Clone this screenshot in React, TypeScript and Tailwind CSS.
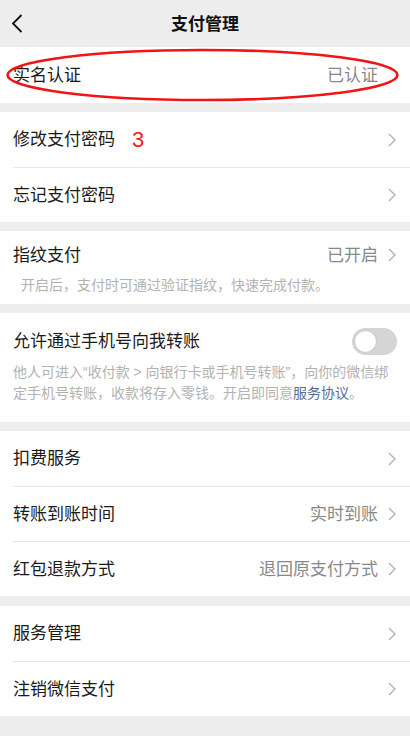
import React, { useState } from 'react';

const font = "font-['Liberation_Sans','Noto_Sans_CJK_SC',sans-serif]";

const Chevron = ({ hidden = false }: { hidden?: boolean }) => (
  <svg
    width="8"
    height="14"
    viewBox="0 0 8 14"
    className={`ml-[10px] shrink-0 ${hidden ? 'invisible' : ''}`}
  >
    <polyline points="1,1 7,7 1,13" fill="none" stroke="#b2b2b2" strokeWidth="1.4" />
  </svg>
);

interface RowProps {
  label: string;
  value?: string;
  extra?: React.ReactNode;
  divider?: boolean;
  noArrow?: boolean;
  height?: string;
}

const Row: React.FC<RowProps> = ({ label, value, extra, divider, noArrow, height = 'h-[55px]' }) => (
  <div className="pl-[13px]">
    <div
      className={`flex ${height} items-center pr-[14px] ${divider ? 'border-t border-[#e8e8e8]' : ''}`}
    >
      <span className="pt-px text-[17px] leading-6 text-[#1a1a1a]">{label}</span>
      {extra}
      <div className="flex-1" />
      {value && <span className="pt-px text-[17px] leading-6 text-[#888888]">{value}</span>}
      <Chevron hidden={noArrow} />
    </div>
  </div>
);

const Section: React.FC<{ children: React.ReactNode; className?: string }> = ({ children, className = '' }) => (
  <div className={`bg-white ${className}`}>{children}</div>
);

export default function App() {
  const [allowPhone, setAllowPhone] = useState(false);

  return (
    <div className={`min-h-screen bg-[#ededed] ${font}`}>
      {/* nav bar */}
      <div className="grid h-[47px] grid-cols-[48px_1fr_48px] items-center bg-[#ededed]">
        <div className="pl-[12px]">
          <svg width="11" height="19" viewBox="0 0 11 19">
            <polyline points="9.5,1 1,9.5 9.5,18" fill="none" stroke="#111" strokeWidth="1.8" />
          </svg>
        </div>
        <div className="pt-[3px] text-center text-[17px] font-semibold leading-6 text-[#111]">支付管理</div>
        <div />
      </div>

      <div className="flex flex-col gap-[9px] pb-[20px]">
        <Section className="relative">
          <Row label="实名认证" value="已认证" noArrow height="h-[56px]" />
          {/* red annotation ring */}
          <svg
            width="410"
            height="56"
            viewBox="0 0 410 56"
            className="pointer-events-none absolute left-0 top-0 overflow-visible"
          >
            <ellipse cx="202.5" cy="28" rx="195" ry="25" fill="none" stroke="#f21414" strokeWidth="2.6" />
          </svg>
        </Section>

        <Section>
          <Row
            label="修改支付密码"
            extra={<span className="ml-[17px] text-[22px] leading-6 text-[#ff1a1a]">3</span>}
          />
          <Row label="忘记支付密码" divider />
        </Section>

        <Section className="pb-[9px]">
          <Row label="指纹支付" value="已开启" height="h-[48px]" />
          <p className="-mt-1 pl-[21px] text-[14px] leading-5 text-[#b2b2b2]">
            开启后，支付时可通过验证指纹，快速完成付款。
          </p>
        </Section>

        <Section className="pb-[18px]">
          <div className="flex h-[56px] items-center pl-[13px] pr-[13px]">
            <span className="flex-1 pt-px text-[17px] leading-6 text-[#1a1a1a]">允许通过手机号向我转账</span>
            <button
              onClick={() => setAllowPhone(!allowPhone)}
              className={`flex h-[27px] w-[45px] items-center rounded-full p-[2px] ${
                allowPhone ? 'justify-end bg-[#07c160]' : 'justify-start bg-[#d5d5d5]'
              }`}
            >
              <span className="h-[23px] w-[23px] rounded-full border border-[#c4c4c4] bg-white" />
            </button>
          </div>
          <p className="-mt-[7px] px-[13px] text-[14px] leading-[21px] text-[#b2b2b2]">
            他人可进入“收付款 &gt; 向银行卡或手机号转账”，向你的微信绑
            <br />
            定手机号转账，收款将存入零钱。开启即同意<span className="text-[#576b95]">服务协议</span>。
          </p>
        </Section>

        <Section>
          <Row label="扣费服务" />
          <Row label="转账到账时间" value="实时到账" divider />
          <Row label="红包退款方式" value="退回原支付方式" divider />
        </Section>

        <Section className="mt-px">
          <Row label="服务管理" />
          <Row label="注销微信支付" divider />
        </Section>
      </div>
    </div>
  );
}
